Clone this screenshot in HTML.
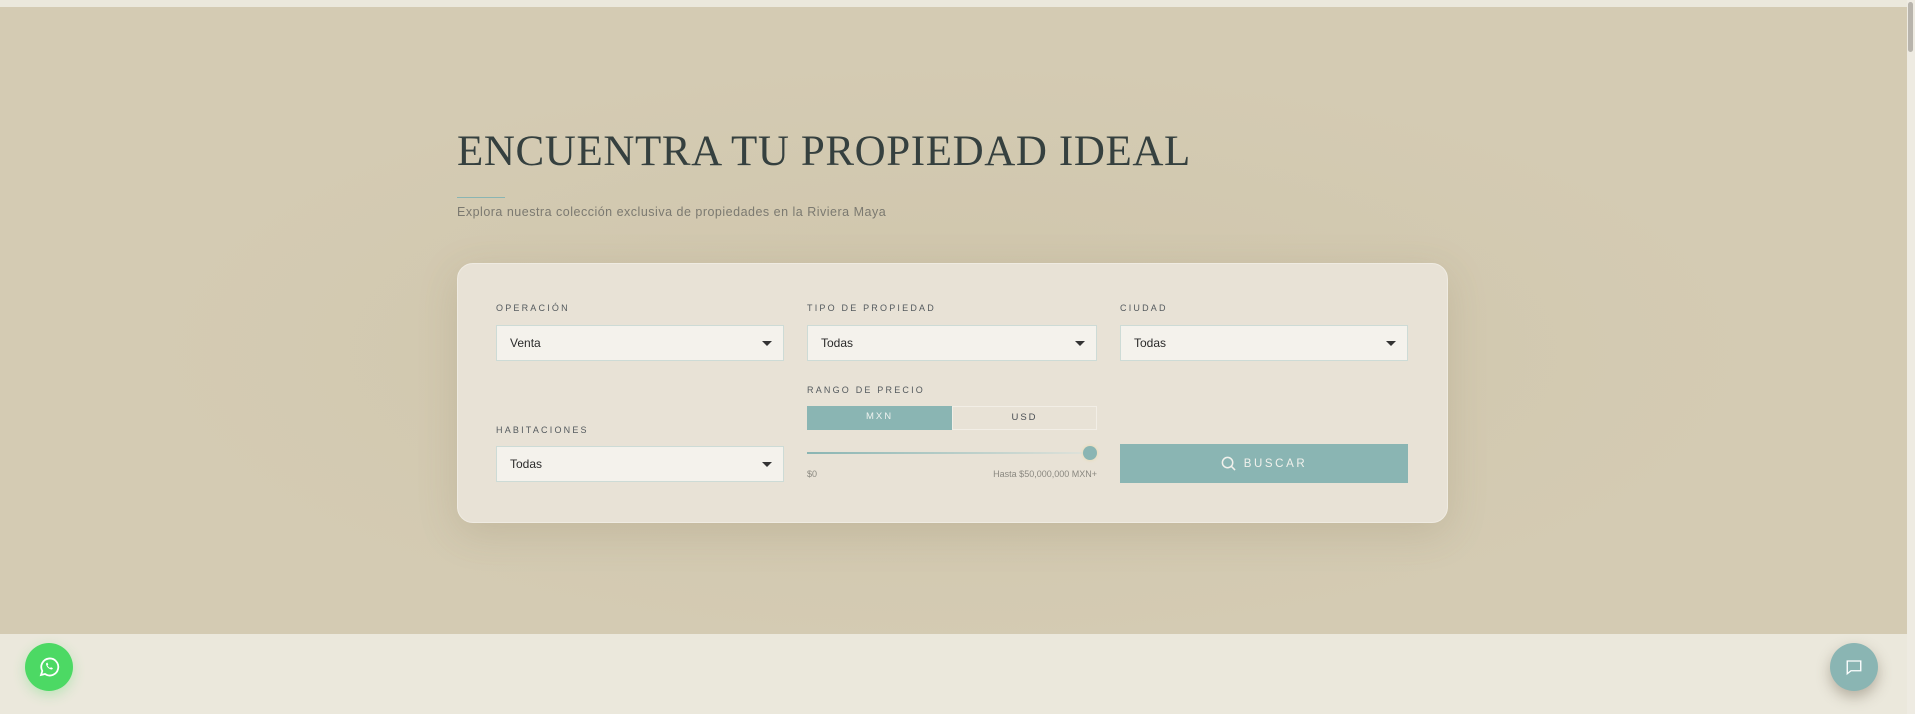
<!DOCTYPE html>
<html><head><meta charset="utf-8"><style>
*{box-sizing:border-box;margin:0;padding:0}
body{width:1915px;height:714px;overflow:hidden;background:#ebe8dc;font-family:"Liberation Sans",sans-serif;position:relative}
.top{position:absolute;left:0;top:0;width:1907px;height:7px;background:#ebe8dc}
.hero{position:absolute;left:0;top:7px;width:1907px;height:627px;background:radial-gradient(ellipse at 50% 55%,#cfc5ab 0%,#d4cbb3 60%)}
.sb{position:absolute;right:0;top:0;width:8px;height:714px;background:#eeebe2}
.sb i{position:absolute;left:1px;top:2px;width:5px;height:50px;background:#b8b4ac;border-radius:3px}
h1{position:absolute;left:457px;top:127px;font-family:"Liberation Serif",serif;font-weight:normal;font-size:43px;letter-spacing:0.6px;color:#35403f;white-space:nowrap}
.line{position:absolute;left:457px;top:197px;width:48px;height:1px;background:#8ab5b3}
.sub{position:absolute;left:457px;top:205px;font-size:12.5px;color:#7b7970;letter-spacing:.5px}
.card{position:absolute;left:457px;top:263px;width:991px;height:260px;background:#e8e2d6;border-radius:16px;border:1px solid #efebe2;box-shadow:0 10px 40px rgba(120,105,70,.18)}
.lab{position:absolute;font-size:9px;letter-spacing:2.2px;color:#545a5e}
.sel{position:absolute;height:36px;background:#f4f2ec;border:1px solid #cddbd6;font-size:12px;color:#2a2a2a;padding:0 13px;line-height:34px}
.sel:after{content:"";position:absolute;right:11px;top:15px;border-left:5px solid transparent;border-right:5px solid transparent;border-top:5px solid #333}
.tog{position:absolute;top:406px;height:24px;font-size:9.5px;letter-spacing:2px;text-align:center;line-height:22px}
.btn{position:absolute;left:1120px;top:444px;width:288px;height:39px;background:#8ab5b3;color:#f1f1ec;font-size:11.5px;letter-spacing:2.6px;display:flex;align-items:center;justify-content:center;gap:8px}
.fab{position:absolute;width:48px;height:48px;border-radius:50%;display:flex;align-items:center;justify-content:center}
</style></head><body>
<div class="top"></div>
<div class="hero"></div>
<h1>ENCUENTRA TU PROPIEDAD IDEAL</h1>
<div class="line"></div>
<div class="sub">Explora nuestra colección exclusiva de propiedades en la Riviera Maya</div>
<div class="card"></div>
<div class="lab" style="left:496px;top:303px">OPERACIÓN</div>
<div class="lab" style="left:807px;top:303px">TIPO DE PROPIEDAD</div>
<div class="lab" style="left:1120px;top:303px">CIUDAD</div>
<div class="sel" style="left:496px;top:325px;width:288px">Venta</div>
<div class="sel" style="left:807px;top:325px;width:290px">Todas</div>
<div class="sel" style="left:1120px;top:325px;width:288px">Todas</div>
<div class="lab" style="left:807px;top:385px">RANGO DE PRECIO</div>
<div class="tog" style="left:807px;width:145px;background:#8ab5b3;color:#eef2ef">MXN</div>
<div class="tog" style="left:952px;width:145px;border:1px solid #f2eee6;color:#4a4f55">USD</div>
<div style="position:absolute;left:807px;top:452px;width:280px;height:2px;background:linear-gradient(90deg,#8ab5b3,#dfe2da)"></div>
<div style="position:absolute;left:1083px;top:446px;width:14px;height:14px;border-radius:50%;background:#8ab5b3;box-shadow:0 0 3px #e8d9a8"></div>
<div style="position:absolute;left:807px;top:469px;font-size:9px;color:#8a8880">$0</div>
<div style="position:absolute;left:957px;width:140px;text-align:right;top:469px;font-size:9px;color:#8a8880">Hasta $50,000,000 MXN+</div>
<div class="lab" style="left:496px;top:425px">HABITACIONES</div>
<div class="sel" style="left:496px;top:446px;width:288px">Todas</div>
<div class="btn"><svg width="15" height="15" viewBox="0 0 16 16" fill="none" stroke="#f1f1ec" stroke-width="1.6"><circle cx="7" cy="7" r="5.5"/><path d="M11 11l4 4"/></svg>BUSCAR</div>
<div class="fab" style="left:25px;top:643px;background:#4cd964;box-shadow:0 4px 12px rgba(76,217,100,.3)"><svg width="24" height="24" viewBox="0 0 24 24" fill="none" stroke="#fff" stroke-width="1.8"><path d="M4 20l1.3-4A8.5 8.5 0 1 1 8 19z"/><path d="M9 8.5c0 3 3 6 6 6l1-1.3-2-1-1 .8c-1-.5-2-1.5-2.5-2.5l.8-1-1-2z" fill="#fff" stroke="none"/></svg></div>
<div class="fab" style="left:1830px;top:643px;background:#8ab5b3;box-shadow:0 6px 14px rgba(80,70,50,.35)"><svg width="18" height="18" viewBox="0 0 24 24" fill="none" stroke="#fff" stroke-width="1.8"><path d="M3 4h18v13H8l-5 4z"/></svg></div>
<div class="sb"><i></i></div>
</body></html>
